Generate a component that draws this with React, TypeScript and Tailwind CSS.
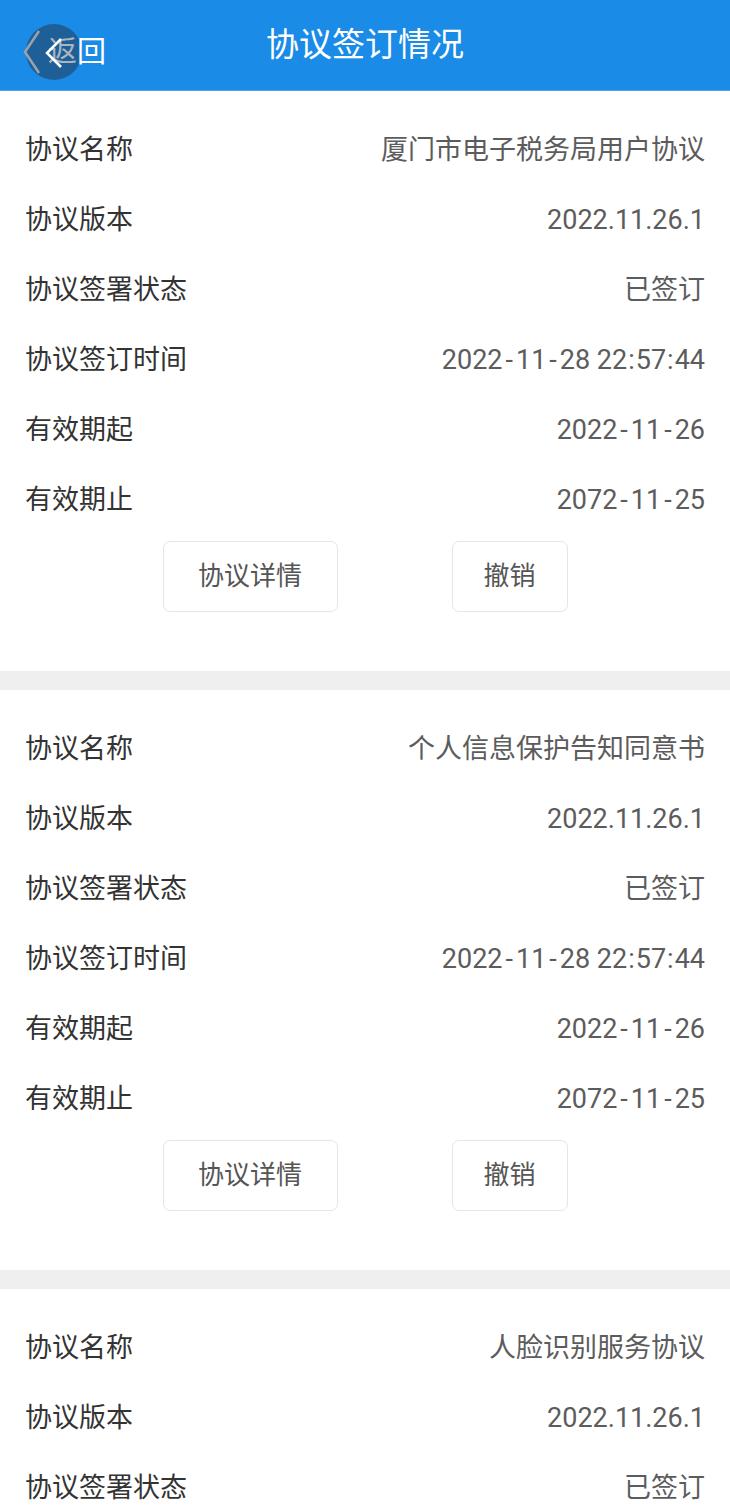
import React from 'react'

interface Agreement {
  name: string
  version: string
  status: string
  signedAt: string
  validFrom: string
  validTo: string
}

const agreements: Array<Agreement> = [
  {
    name: '厦门市电子税务局用户协议',
    version: '2022.11.26.1',
    status: '已签订',
    signedAt: '2022-11-28 22:57:44',
    validFrom: '2022-11-26',
    validTo: '2072-11-25',
  },
  {
    name: '个人信息保护告知同意书',
    version: '2022.11.26.1',
    status: '已签订',
    signedAt: '2022-11-28 22:57:44',
    validFrom: '2022-11-26',
    validTo: '2072-11-25',
  },
  {
    name: '人脸识别服务协议',
    version: '2022.11.26.1',
    status: '已签订',
    signedAt: '2022-11-28 22:57:44',
    validFrom: '2022-11-26',
    validTo: '2072-11-25',
  },
]

// dates in the app use a wider dash than Roboto's hyphen
function DateText({ value }: { value: string }) {
  const parts = value.split('-')
  return (
    <>
      {parts.map((p, i) => (
        <React.Fragment key={i}>
          {i > 0 && <span className="mx-[3px]">-</span>}
          {p.split(':').map((q, j) => (
            <React.Fragment key={j}>
              {j > 0 && <span className="mx-[1px]">:</span>}
              {q}
            </React.Fragment>
          ))}
        </React.Fragment>
      ))}
    </>
  )
}

function Row({ label, value }: { label: string; value: string }) {
  return (
    <div className="h-[70px] flex items-center justify-between">
      <span className="text-[27px] text-[#333333]">{label}</span>
      <span className="text-[27px] text-[#5c5c5c]">
        <DateText value={value} />
      </span>
    </div>
  )
}

function AgreementCard({ item }: { item: Agreement }) {
  return (
    <div className="bg-white px-[25px] pt-[24px] pb-[59px]">
      <Row label="协议名称" value={item.name} />
      <Row label="协议版本" value={item.version} />
      <Row label="协议签署状态" value={item.status} />
      <Row label="协议签订时间" value={item.signedAt} />
      <Row label="有效期起" value={item.validFrom} />
      <Row label="有效期止" value={item.validTo} />
      <div className="mt-[6px] flex justify-center gap-[114px]">
        <button className="w-[175px] h-[71px] rounded-[7px] border border-[#e6e6e6] bg-white text-[26px] text-[#555555]">
          协议详情
        </button>
        <button className="w-[116px] h-[71px] rounded-[7px] border border-[#e6e6e6] bg-white text-[26px] text-[#555555]">
          撤销
        </button>
      </div>
    </div>
  )
}

export default function App() {
  return (
    <div
      className="min-h-screen bg-[#efefef]"
      style={{ fontFamily: 'Roboto, "Noto Sans CJK SC", sans-serif' }}
    >
      {/* Header */}
      <div className="relative h-[91px] bg-[#1a8be6] border-b border-[#4da2ec] flex items-center justify-center">
        <div className="absolute left-[22px] top-[24px] h-[56px] flex items-center">
          <div className="absolute left-[4px] top-0 w-[56px] h-[56px] rounded-full bg-[#1f5f97]" />
          <svg className="relative" width="20" height="46" viewBox="0 0 20 46">
            <path d="M17 2 L3 23 L17 44" fill="none" stroke="#9aa3ad" strokeWidth="2.5" />
          </svg>
          <span className="relative ml-[6px] text-[29px] text-white leading-none">
            <span className="text-[#a9b6c2]">返</span>回
          </span>
          <svg className="absolute left-[22px] top-[13px]" width="20" height="32" viewBox="0 0 20 32">
            <path d="M17 2 L3 16 L17 30" fill="none" stroke="#ffffff" strokeWidth="2.5" />
          </svg>
        </div>
        <h1 className="text-[33px] text-white font-normal">协议签订情况</h1>
      </div>

      <div className="flex flex-col gap-[19px]">
        {agreements.map((item, index) => (
          <AgreementCard key={index} item={item} />
        ))}
      </div>
    </div>
  )
}
